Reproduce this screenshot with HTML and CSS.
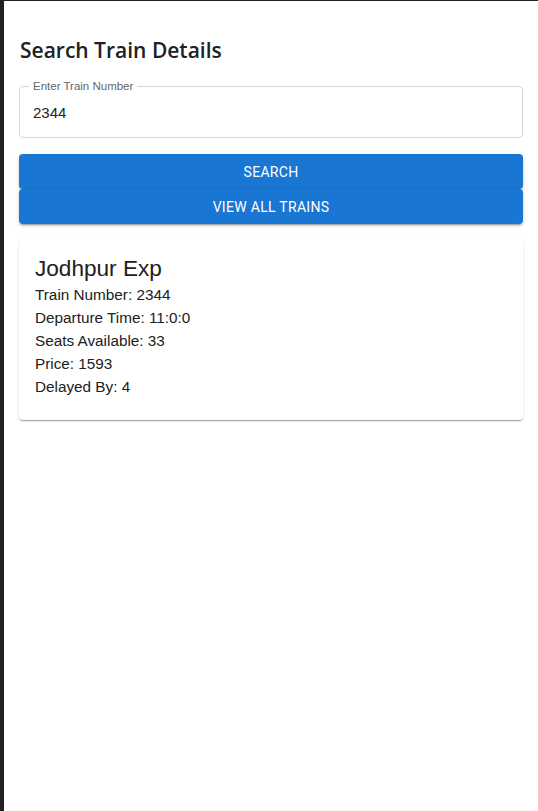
FILE: index.html
```html
<!DOCTYPE html>
<html lang="en">
<head>
<meta charset="utf-8">
<title>Search Train Details</title>
<link rel="stylesheet" href="styles.css">
</head>
<body>
<main class="container">
  <h1 class="title">Search Train Details</h1>
  <div class="field">
    <span class="field-label">Enter Train Number</span>
    <div class="field-value">2344</div>
  </div>
  <div class="actions">
    <button class="btn">SEARCH</button>
    <button class="btn">VIEW ALL TRAINS</button>
  </div>
  <section class="card">
    <h2 class="card-title">Jodhpur Exp</h2>
    <p class="card-line">Train Number: 2344</p>
    <p class="card-line">Departure Time: 11:0:0</p>
    <p class="card-line">Seats Available: 33</p>
    <p class="card-line">Price: 1593</p>
    <p class="card-line">Delayed By: 4</p>
  </section>
</main>
</body>
</html>
```

FILE: styles.css
```css
html {
  background: #202124;
  height: 100%;
}
body {
  margin: 1px 0 0 4px;
  background: #ffffff;
  min-height: 810px;
  font-family: "Liberation Sans", Arial, sans-serif;
  color: #212121;
}
.container {
  padding: 25px 15px 0 15px;
  display: flex;
  flex-direction: column;
}
.title {
  font-family: "Open Sans", "Noto Sans", sans-serif;
  font-weight: 600;
  font-size: 21px;
  line-height: 32px;
  margin: 8px 0 20px 1px;
  color: #202124;
}
.field {
  position: relative;
  box-sizing: border-box;
  height: 52px;
  border: 1px solid #d6d6d6;
  border-radius: 4px;
  padding: 0 13px;
  display: flex;
  align-items: center;
}
.field-label {
  position: absolute;
  top: -7px;
  left: 9px;
  padding: 0 4px;
  background: #fff;
  font-size: 11.5px;
  line-height: 13px;
  color: #666;
}
.field-value {
  font-size: 15px;
  line-height: 20px;
  padding-top: 2px;
  color: #222;
}
.actions {
  margin-top: 16px;
  display: flex;
  flex-direction: column;
}
.btn {
  background: #1976d2;
  color: #fff;
  border: none;
  border-radius: 4px;
  height: 35px;
  font-family: Roboto, "Liberation Sans", sans-serif;
  font-weight: 400;
  font-size: 14px;
  letter-spacing: 0.3px;
  box-shadow: 0 3px 1px -2px rgba(0,0,0,0.2), 0 2px 2px 0 rgba(0,0,0,0.14), 0 1px 5px 0 rgba(0,0,0,0.12);
  padding: 0 16px;
}
.card {
  margin-top: 15px;
  background: #fff;
  border-radius: 4px;
  box-shadow: 0 2px 1px -1px rgba(0,0,0,0.2), 0 1px 1px 0 rgba(0,0,0,0.14), 0 1px 3px 0 rgba(0,0,0,0.12);
  padding: 16px 16px 22px 16px;
}
.card-title {
  font-weight: 400;
  font-size: 22.6px;
  line-height: 28px;
  margin: 0;
}
.card-line {
  margin: 0;
  font-size: 15.3px;
  line-height: 23px;
}
```
